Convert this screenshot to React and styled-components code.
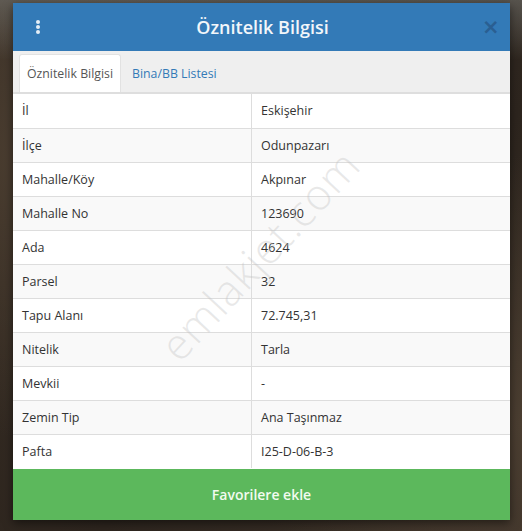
import styled, { createGlobalStyle } from 'styled-components'

const GlobalStyle = createGlobalStyle`
    html, body {
        margin: 0;
        padding: 0;
        height: 100%;
    }
    body {
        font-family: "Open Sans", "Noto Sans", "Liberation Sans", sans-serif;
        background: #2f2720;
    }
`

const Backdrop = styled.div`
    width: 522px;
    height: 531px;
    box-sizing: border-box;
    padding: 3px 12px 11px 13px;
    background:
        linear-gradient(180deg, rgba(120,120,115,0.55) 0px, rgba(120,120,115,0.2) 40px, transparent 60px),
        radial-gradient(circle at 5% 30%, #4a3d30 0%, transparent 45%),
        radial-gradient(circle at 100% 80%, #4b3e31 0%, transparent 40%),
        linear-gradient(135deg, #3a3027, #2d251e 60%, #3b3128);
`

const Modal = styled.div`
    position: relative;
    width: 497px;
    height: 517px;
    display: flex;
    flex-direction: column;
    background: #fff;
    box-shadow: 0 3px 9px rgba(0,0,0,0.5);
    overflow: hidden;
`

const Header = styled.div`
    height: 48px;
    flex-shrink: 0;
    display: flex;
    align-items: center;
    justify-content: space-between;
    padding: 0 14px 0 20px;
    background: #337ab7;
    color: #fff;
`

const Kebab = styled.div`
    display: flex;
    flex-direction: column;
    gap: 1px;
    width: 10px;
    align-items: center;
    & span {
        width: 4px;
        height: 4px;
        border-radius: 50%;
        background: #e6eef6;
    }
`

const Title = styled.h1`
    margin: 0;
    font-size: 18px;
    font-weight: 600;
    color: #f2f6fa;
`

const Close = styled.button`
    border: 0;
    background: none;
    padding: 0;
    width: 14px;
    color: #2a5f92;
    font-size: 21px;
    font-weight: 700;
    line-height: 1;
    font-family: "DejaVu Sans", sans-serif;
    cursor: pointer;
`

const TabBar = styled.div`
    height: 41px;
    flex-shrink: 0;
    display: flex;
    align-items: flex-end;
    padding: 0 6px;
    background: #efefef;
    border-bottom: 2px solid #dedede;
`

const Tab = styled.div`
    height: 37px;
    display: flex;
    align-items: center;
    padding: 0 7px;
    margin-right: 3px;
    font-size: 12.3px;
    color: ${({active}) => active ? '#555' : '#337ab7'};
    background: ${({active}) => active ? '#fff' : 'transparent'};
    border: 1px solid ${({active}) => active ? '#e2e2e2' : 'transparent'};
    border-bottom: 0;
    border-radius: 3px 3px 0 0;
`

const Table = styled.table`
    width: 100%;
    border-collapse: collapse;
    font-size: 12.5px;
    color: #333;
    & tr {
        height: 34px;
    }
    & td {
        padding: 0 9px;
        border-top: 1px solid #dddddd;
    }
    & tr:first-child td {
        border-top: 0;
    }
    & td:first-child {
        width: 220px;
        border-right: 1px solid #dddddd;
    }
    & tr:nth-child(even) td {
        background: #f9f9f9;
    }
`

const Watermark = styled.div`
    position: absolute;
    left: 112px;
    top: 222px;
    transform: rotate(-47deg);
    font-size: 43px;
    font-weight: 300;
    letter-spacing: 1px;
    color: rgba(190,190,190,0.35);
    pointer-events: none;
    white-space: nowrap;
`

const FavButton = styled.button`
    height: 51px;
    flex-shrink: 0;
    border: 0;
    margin-top: auto;
    background: #5cb85c;
    color: #f2fbef;
    font-family: inherit;
    font-size: 14px;
    font-weight: 600;
    cursor: pointer;
`

const rows = [
    ['İl', 'Eskişehir'],
    ['İlçe', 'Odunpazarı'],
    ['Mahalle/Köy', 'Akpınar'],
    ['Mahalle No', '123690'],
    ['Ada', '4624'],
    ['Parsel', '32'],
    ['Tapu Alanı', '72.745,31'],
    ['Nitelik', 'Tarla'],
    ['Mevkii', '-'],
    ['Zemin Tip', 'Ana Taşınmaz'],
    ['Pafta', 'I25-D-06-B-3'],
]

function App(){
    return(
        <Backdrop>
            <GlobalStyle />
            <Modal>
                <Header>
                    <Kebab><span /><span /><span /></Kebab>
                    <Title>Öznitelik Bilgisi</Title>
                    <Close aria-label="Kapat">×</Close>
                </Header>
                <TabBar>
                    <Tab active>Öznitelik Bilgisi</Tab>
                    <Tab>Bina/BB Listesi</Tab>
                </TabBar>
                <Table>
                    <tbody>
                        {rows.map(([label, value]) =>
                            <tr key={label}>
                                <td>{label}</td>
                                <td>{value}</td>
                            </tr>
                        )}
                    </tbody>
                </Table>
                <Watermark>emlakjet.com</Watermark>
                <FavButton>Favorilere ekle</FavButton>
            </Modal>
        </Backdrop>
    )
}

export default App
